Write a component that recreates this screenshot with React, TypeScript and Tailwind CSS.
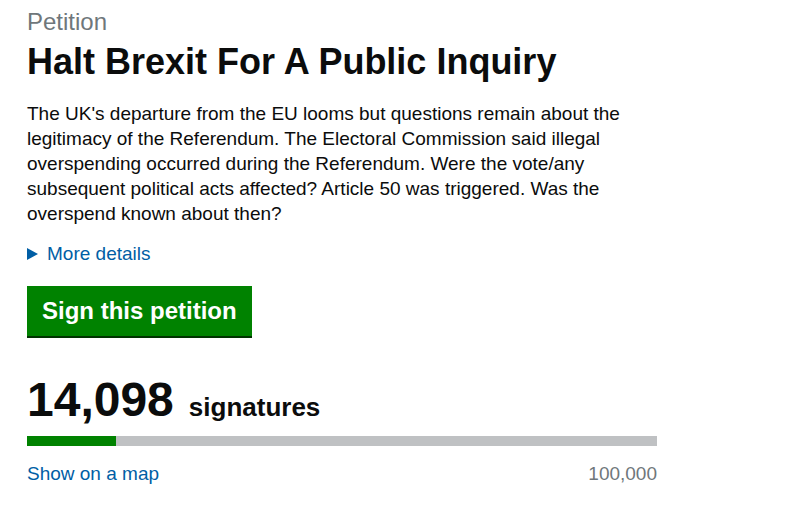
export default function App() {
  const count = 14098;
  const target = 100000;
  const pct = (count / target) * 100;

  return (
    <div className="min-h-screen bg-white font-['Liberation_Sans',Arial,sans-serif] text-[#0b0c0c]">
      <div className="w-[630px] ml-[27px] pt-[8px]">
        <p className="text-[24px] leading-[28px] text-[#6f777b]">Petition</p>
        <h1 className="mt-[6px] text-[36px] leading-[40px] font-bold">Halt Brexit For A Public Inquiry</h1>

        <p className="mt-[19px] text-[19px] leading-[25px]">
          The UK's departure from the EU looms but questions remain about the legitimacy of the Referendum. The
          Electoral Commission said illegal overspending occurred during the Referendum. Were the vote/any subsequent
          political acts affected? Article 50 was triggered. Was the overspend known about then?
        </p>

        <div className="mt-[15px] flex items-center gap-[9px] text-[19px] leading-[25px] text-[#005ea5]">
          <svg width="11" height="12" viewBox="0 0 11 12" className="shrink-0">
            <path d="M0 0 L11 6 L0 12 Z" fill="#005ea5" />
          </svg>
          <span>More details</span>
        </div>

        <button className="mt-[20px] h-[50px] px-[15px] bg-[#008200] text-white text-[24px] font-bold shadow-[0_2px_0_#003300]">
          Sign this petition
        </button>

        <div className="mt-[36px] flex items-baseline gap-[15px]">
          <span className="text-[48px] leading-[56px] font-bold">14,098</span>
          <span className="text-[26px] font-bold">signatures</span>
        </div>

        <div className="mt-[8px] h-[10px] bg-[#bfc1c3]">
          <div className="h-full bg-[#008200]" style={{ width: `${pct}%` }} />
        </div>

        <div className="mt-[15px] flex justify-between text-[19px] leading-[25px]">
          <a className="text-[#005ea5]">Show on a map</a>
          <span className="text-[#6f777b]">100,000</span>
        </div>
      </div>
    </div>
  );
}
